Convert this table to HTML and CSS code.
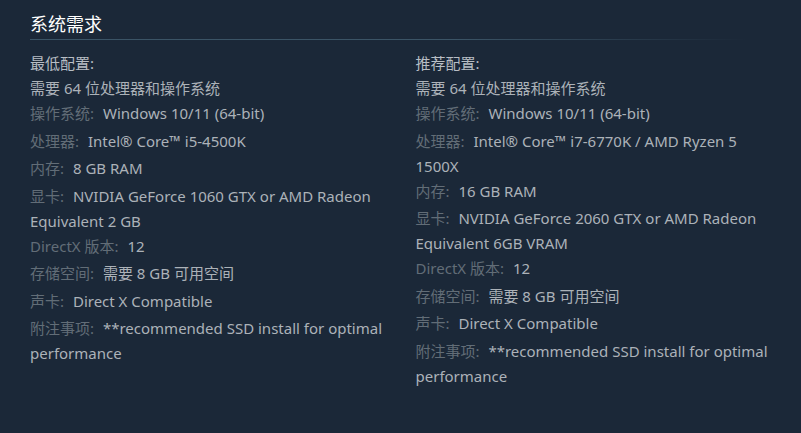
FILE: index.html
```html
<!DOCTYPE html>
<html lang="zh-CN">
<head>
<meta charset="utf-8">
<title>系统需求</title>
<link rel="stylesheet" href="styles.css">
</head>
<body>
<section class="sysreq">
  <h2 class="sysreq-title">系统需求</h2>
  <div class="sysreq-cols">
    <div class="sysreq-col">
      <div class="col-head">最低配置:</div>
      <ul class="req-list">
        <li>需要 64 位处理器和操作系统</li>
        <li class="kv"><span class="lbl">操作系统:</span> Windows 10/11 (64-bit)</li>
        <li class="kv"><span class="lbl">处理器:</span> Intel® Core™ i5-4500K</li>
        <li class="kv"><span class="lbl">内存:</span> 8 GB RAM</li>
        <li class="kv"><span class="lbl">显卡:</span> NVIDIA GeForce 1060 GTX or AMD Radeon Equivalent 2 GB</li>
        <li class="kv"><span class="lbl">DirectX 版本:</span> 12</li>
        <li class="kv"><span class="lbl">存储空间:</span> 需要 8 GB 可用空间</li>
        <li class="kv"><span class="lbl">声卡:</span> Direct X Compatible</li>
        <li class="kv"><span class="lbl">附注事项:</span> **recommended SSD install for optimal performance</li>
      </ul>
    </div>
    <div class="sysreq-col">
      <div class="col-head">推荐配置:</div>
      <ul class="req-list">
        <li>需要 64 位处理器和操作系统</li>
        <li class="kv"><span class="lbl">操作系统:</span> Windows 10/11 (64-bit)</li>
        <li class="kv"><span class="lbl">处理器:</span> Intel® Core™ i7-6770K / AMD Ryzen 5 1500X</li>
        <li class="kv"><span class="lbl">内存:</span> 16 GB RAM</li>
        <li class="kv"><span class="lbl">显卡:</span> NVIDIA GeForce 2060 GTX or AMD Radeon Equivalent 6GB VRAM</li>
        <li class="kv"><span class="lbl">DirectX 版本:</span> 12</li>
        <li class="kv"><span class="lbl">存储空间:</span> 需要 8 GB 可用空间</li>
        <li class="kv"><span class="lbl">声卡:</span> Direct X Compatible</li>
        <li class="kv"><span class="lbl">附注事项:</span> **recommended SSD install for optimal performance</li>
      </ul>
    </div>
  </div>
</section>
</body>
</html>
```

FILE: styles.css
```css
html, body {
  margin: 0;
  padding: 0;
  background: #1b2838;
  height: 100%;
}

body {
  font-family: "Noto Sans", "Noto Sans CJK SC", sans-serif;
  color: #acb2b8;
}

.sysreq {
  padding: 0 0 0 30px;
}

.sysreq-title {
  margin: 0;
  padding: 11px 0 5px;
  font-size: 18px;
  line-height: 24px;
  font-weight: normal;
  color: #ffffff;
  font-family: "Noto Sans CJK SC", sans-serif;
  background-image: linear-gradient(to right, #3b5466 0%, #3b5466 55%, rgba(59, 84, 102, 0) 93%);
  background-repeat: no-repeat;
  background-size: 100% 1px;
  background-position: left bottom;
}

.sysreq-cols {
  display: grid;
  grid-template-columns: 1fr 1fr;
  padding-top: 11px;
}

.sysreq-col {
  padding-right: 20px;
  font-size: 15px;
  line-height: 25px;
}

.col-head {
  color: #b8bec4;
}

.req-list {
  list-style: none;
  margin: 0;
  padding: 0;
}

.req-list .kv {
  min-height: 27.5px;
}

.lbl {
  color: #626d77;
  margin-right: 5px;
}
```
